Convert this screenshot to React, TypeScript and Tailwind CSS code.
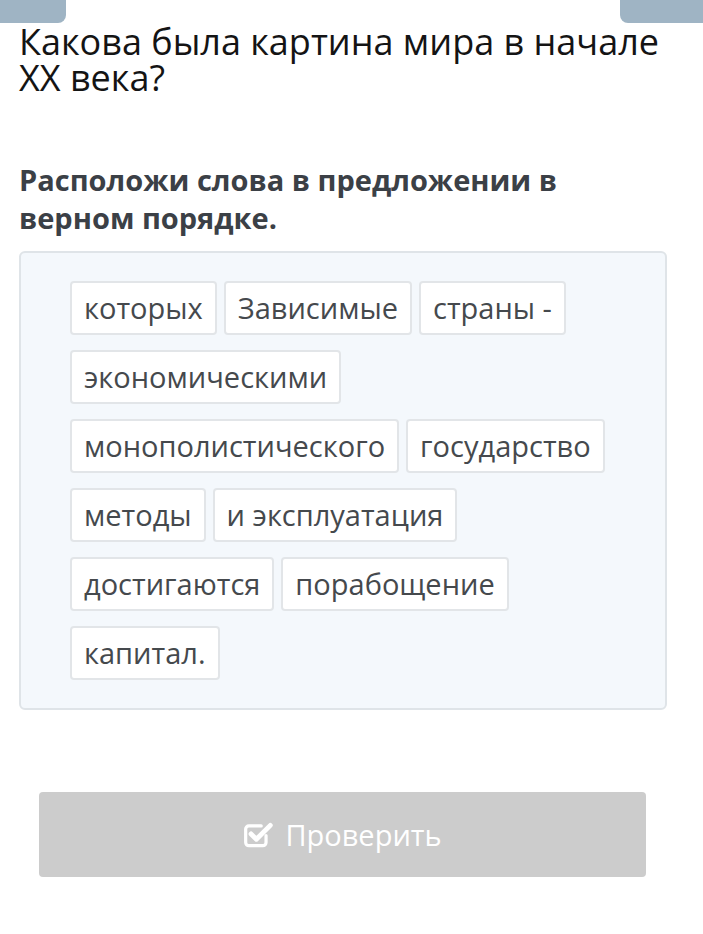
const words = [
  "которых",
  "Зависимые",
  "страны -",
  "экономическими",
  "монополистического",
  "государство",
  "методы",
  "и эксплуатация",
  "достигаются",
  "порабощение",
  "капитал.",
];

function CheckSquareIcon() {
  return (
    <svg width="30" height="30" viewBox="0 0 28 28" fill="none" aria-hidden="true">
      <path d="M21.5 14.5v6.5a3 3 0 0 1-3 3H5.5a3 3 0 0 1-3-3V8.5a3 3 0 0 1 3-3H17" stroke="white" strokeWidth="3" strokeLinecap="round" />
      <path d="M7.5 13l5 5L25.5 5" stroke="white" strokeWidth="4.5" strokeLinecap="round" strokeLinejoin="round" />
    </svg>
  );
}

export default function App() {
  return (
    <div className="min-h-[934px] w-[703px] bg-white font-['Open_Sans',sans-serif]">
      <div className="flex justify-between">
        <div className="h-[23px] w-[66px] rounded-br-[8px] bg-[#9fb4c4]" />
        <div className="h-[23px] w-[83px] rounded-bl-[8px] bg-[#9fb4c4]" />
      </div>

      <h1 className="px-[19px] pt-[1px] text-[36px] leading-[36px] font-normal text-[#141414]">
        Какова была картина мира в начале XX века?
      </h1>

      <h2 className="mt-[65px] max-w-[620px] px-[19px] text-[29px] leading-[38px] font-bold text-[#3b4046]">
        Расположи слова в предложении в верном порядке.
      </h2>

      <div className="ml-[19px] mt-[14px] w-[648px] rounded-[6px] border-2 border-[#dfe4e8] bg-[#f4f8fc] px-[49px] py-[28px]">
        <div className="flex flex-wrap gap-x-[7px] gap-y-[15px]">
          {words.map((word) => (
            <div
              key={word}
              className="flex h-[54px] items-center rounded-[4px] border-2 border-[#e2e5e8] bg-white px-[12px] text-[29px] text-[#45494d]"
            >
              {word}
            </div>
          ))}
        </div>
      </div>

      <button
        type="button"
        className="ml-[39px] mt-[82px] flex h-[85px] w-[607px] items-center justify-center gap-[12px] rounded-[4px] bg-[#cccccc] text-[29px] text-white"
      >
        <CheckSquareIcon />
        Проверить
      </button>
    </div>
  );
}
